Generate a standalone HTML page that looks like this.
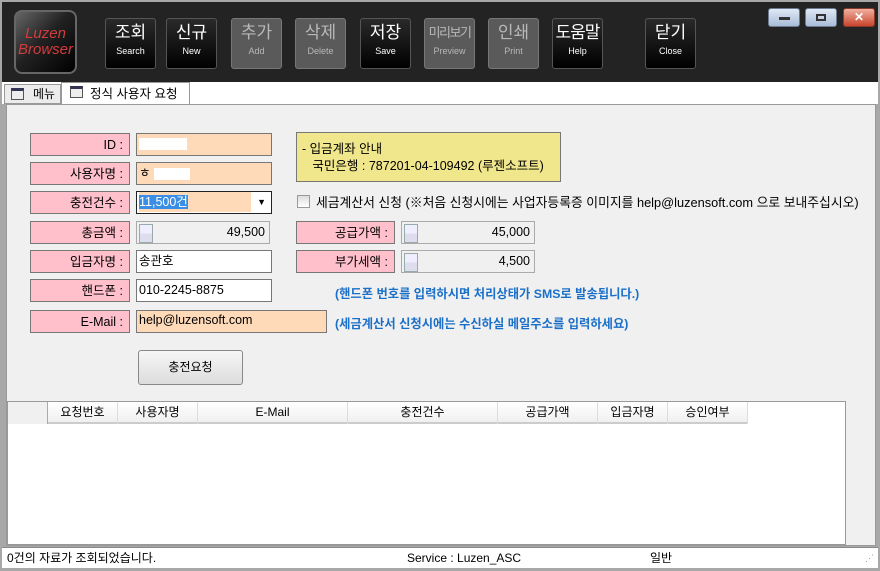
<!DOCTYPE html>
<html><head><meta charset="utf-8"><style>
*{box-sizing:border-box;margin:0;padding:0}
body{width:880px;height:571px;overflow:hidden;background:#a8a8a8;font-family:"Liberation Sans","Noto Sans CJK KR",sans-serif;font-size:12px;color:#000;position:relative}
.a{position:absolute}
.top{left:2px;top:2px;width:876px;height:80px;background:#232323}
.btn{position:absolute;top:18px;width:51px;height:51px;border:1px solid #555;border-radius:3px;background:linear-gradient(#2a2a2a,#000);color:#fff;text-align:center;white-space:nowrap;overflow:hidden}
.btn b{display:block;font-weight:normal;font-size:17px;margin-top:4px;line-height:20px}
.btn i{display:block;font-style:normal;font-size:9px;margin-top:3px}
.btn.d{background:#5a5a5a;border-color:#777;color:#b8b8b8}
.wb{position:absolute;top:8px;width:32px;height:19px;border:1px solid #6a7a90;border-radius:3px;background:linear-gradient(#dfe8f5,#a9bcd8)}
.lab{position:absolute;left:30px;width:100px;height:23px;background:#ffc0cb;border:1px solid #777;text-align:right;padding-right:6px;line-height:22px;font-size:12.5px}
.inp{position:absolute;left:136px;width:136px;height:23px;border:1px solid #777;background:#fff;line-height:20px;padding-left:2px;font-size:12.5px}
.pe{background:#ffdab9}
.sp{position:absolute;height:23px;border:1px solid #aaa;background:#f0f0f0;text-align:right;padding-right:4px;line-height:20px;font-size:12.5px}
.sp:before{content:"";position:absolute;left:2px;top:2px;width:12px;height:17px;border:1px solid #9aa;background:linear-gradient(#eef 50%,#dde 50%)}
.blue{position:absolute;left:335px;color:#1a6fc8;font-weight:bold;font-size:12.3px;white-space:nowrap}
.th{position:absolute;top:0;height:22px;line-height:20px;text-align:center;border-right:1px solid #ddd;font-size:12px}
</style></head><body>
<div class="a top"></div>
<div class="a" style="left:14px;top:10px;width:63px;height:64px;border-radius:8px;border:2px solid #666;background:linear-gradient(135deg,#666 0%,#222 45%,#000 100%);color:#d43b3b;font-style:italic;font-size:15px;line-height:16px;text-align:center;padding-top:14px">Luzen<br>Browser</div>
<div class="btn" style="left:105px"><b>조회</b><i>Search</i></div>
<div class="btn" style="left:166px"><b>신규</b><i>New</i></div>
<div class="btn d" style="left:231px"><b>추가</b><i>Add</i></div>
<div class="btn d" style="left:295px"><b>삭제</b><i>Delete</i></div>
<div class="btn" style="left:360px"><b>저장</b><i>Save</i></div>
<div class="btn d" style="left:424px"><b style="font-size:13px;letter-spacing:-1.5px">미리보기</b><i>Preview</i></div>
<div class="btn d" style="left:488px"><b>인쇄</b><i>Print</i></div>
<div class="btn" style="left:552px"><b style="letter-spacing:-1px">도움말</b><i>Help</i></div>
<div class="btn" style="left:645px"><b>닫기</b><i>Close</i></div>
<div class="wb" style="left:768px"><div class="a" style="left:10px;top:8px;width:11px;height:3px;background:#333"></div></div>
<div class="wb" style="left:805px"><div class="a" style="left:10px;top:5px;width:10px;height:7px;border:2px solid #333"></div></div>
<div class="wb" style="left:843px;background:linear-gradient(#f0b0a0,#c8442c);border-color:#8a3a2a;color:#fff;text-align:center;font-weight:bold;line-height:16px">✕</div>
<div class="a" style="left:2px;top:82px;width:876px;height:22px;background:#fff"></div>
<div class="a" style="left:4px;top:84px;width:57px;height:20px;background:#ececec;border:1px solid #999;padding-left:28px;line-height:18px">메뉴<div class="a" style="left:6px;top:3px;width:13px;height:12px;border:1px solid #555;border-top:3px solid #335;background:#eee"></div></div>
<div class="a" style="left:61px;top:82px;width:129px;height:23px;background:#fff;border:1px solid #999;border-bottom:none;padding-left:28px;line-height:22px;font-size:12.5px">정식 사용자 요청<div class="a" style="left:8px;top:3px;width:13px;height:12px;border:1px solid #555;border-top:3px solid #335;background:#eee"></div></div>
<div class="a" style="left:6px;top:104px;width:870px;height:442px;background:#f0f0f0;border:1px solid #999"></div>

<div class="lab" style="top:133px">ID :</div>
<div class="lab" style="top:162px">사용자명 :</div>
<div class="lab" style="top:191px">충전건수 :</div>
<div class="lab" style="top:221px">총금액 :</div>
<div class="lab" style="top:250px">입금자명 :</div>
<div class="lab" style="top:279px">핸드폰 :</div>
<div class="lab" style="top:310px">E-Mail :</div>
<div class="inp pe" style="top:133px"><span style="display:inline-block;width:48px;height:12px;background:#fff;margin-top:4px"></span></div>
<div class="inp pe" style="top:162px">ㅎ <span style="display:inline-block;width:36px;height:12px;background:#fff;vertical-align:middle"></span></div>
<div class="inp" style="top:191px;border-color:#222;background:#fff"><span style="display:inline-block;width:112px;background:#ffdab9"><span style="background:#3a8ee6;color:#fff">11,500건</span></span><span class="a" style="right:5px;top:0;font-size:9px">▼</span></div>
<div class="sp" style="left:136px;top:221px;width:134px">49,500</div>
<div class="inp" style="top:250px">송관호</div>
<div class="inp" style="top:279px">010-2245-8875</div>
<div class="inp pe" style="top:310px;width:191px;line-height:18px">help@luzensoft.com</div>

<div class="a" style="left:296px;top:132px;width:265px;height:50px;background:#f0e68c;border:1px solid #777;padding:8px 0 0 5px;line-height:17px;font-size:12.5px">- 입금계좌 안내<br>&nbsp;&nbsp;&nbsp;국민은행 : 787201-04-109492 (루젠소프트)</div>
<div class="a" style="left:297px;top:195px;width:13px;height:13px;border:1px solid #999;background:linear-gradient(#ddd,#fff)"></div>
<div class="a" style="left:316px;top:192px;font-size:12.8px;white-space:nowrap">세금계산서 신청 (※처음 신청시에는 사업자등록증 이미지를 help@luzensoft.com 으로 보내주십시오)</div>
<div class="lab" style="left:296px;width:99px;top:221px">공급가액 :</div>
<div class="lab" style="left:296px;width:99px;top:250px">부가세액 :</div>
<div class="sp" style="left:401px;top:221px;width:134px">45,000</div>
<div class="sp" style="left:401px;top:250px;width:134px">4,500</div>
<div class="blue" style="top:284px">(핸드폰 번호를 입력하시면 처리상태가 SMS로 발송됩니다.)</div>
<div class="blue" style="top:314px">(세금계산서 신청시에는 수신하실 메일주소를 입력하세요)</div>
<div class="a" style="left:138px;top:350px;width:105px;height:35px;border:1px solid #888;border-radius:3px;background:linear-gradient(#f6f6f6,#dcdcdc);text-align:center;line-height:33px">충전요청</div>

<div class="a" style="left:7px;top:401px;width:839px;height:144px;background:#fff;border:1px solid #999">
<div class="a" style="left:0;top:0;width:740px;height:22px;background:linear-gradient(#fff,#f0f0f0);border-bottom:2px solid #ccc">
<div class="th" style="left:0;width:40px;background:#f0f0f0;border-right:1px solid #aaa"></div>
<div class="th" style="left:40px;width:70px">요청번호</div>
<div class="th" style="left:110px;width:80px">사용자명</div>
<div class="th" style="left:190px;width:150px">E-Mail</div>
<div class="th" style="left:340px;width:150px">충전건수</div>
<div class="th" style="left:490px;width:100px">공급가액</div>
<div class="th" style="left:590px;width:70px">입금자명</div>
<div class="th" style="left:660px;width:80px">승인여부</div>
</div></div>
<div class="a" style="left:2px;top:547px;width:876px;height:21px;background:#fff;border-top:1px solid #888;font-size:12px;line-height:20px">
<span class="a" style="left:5px">0건의 자료가 조회되었습니다.</span>
<span class="a" style="left:405px">Service : Luzen_ASC</span>
<span class="a" style="left:648px">일반</span>
<span class="a" style="right:4px;color:#999;font-size:9px">⋰</span>
</div>
</body></html>
